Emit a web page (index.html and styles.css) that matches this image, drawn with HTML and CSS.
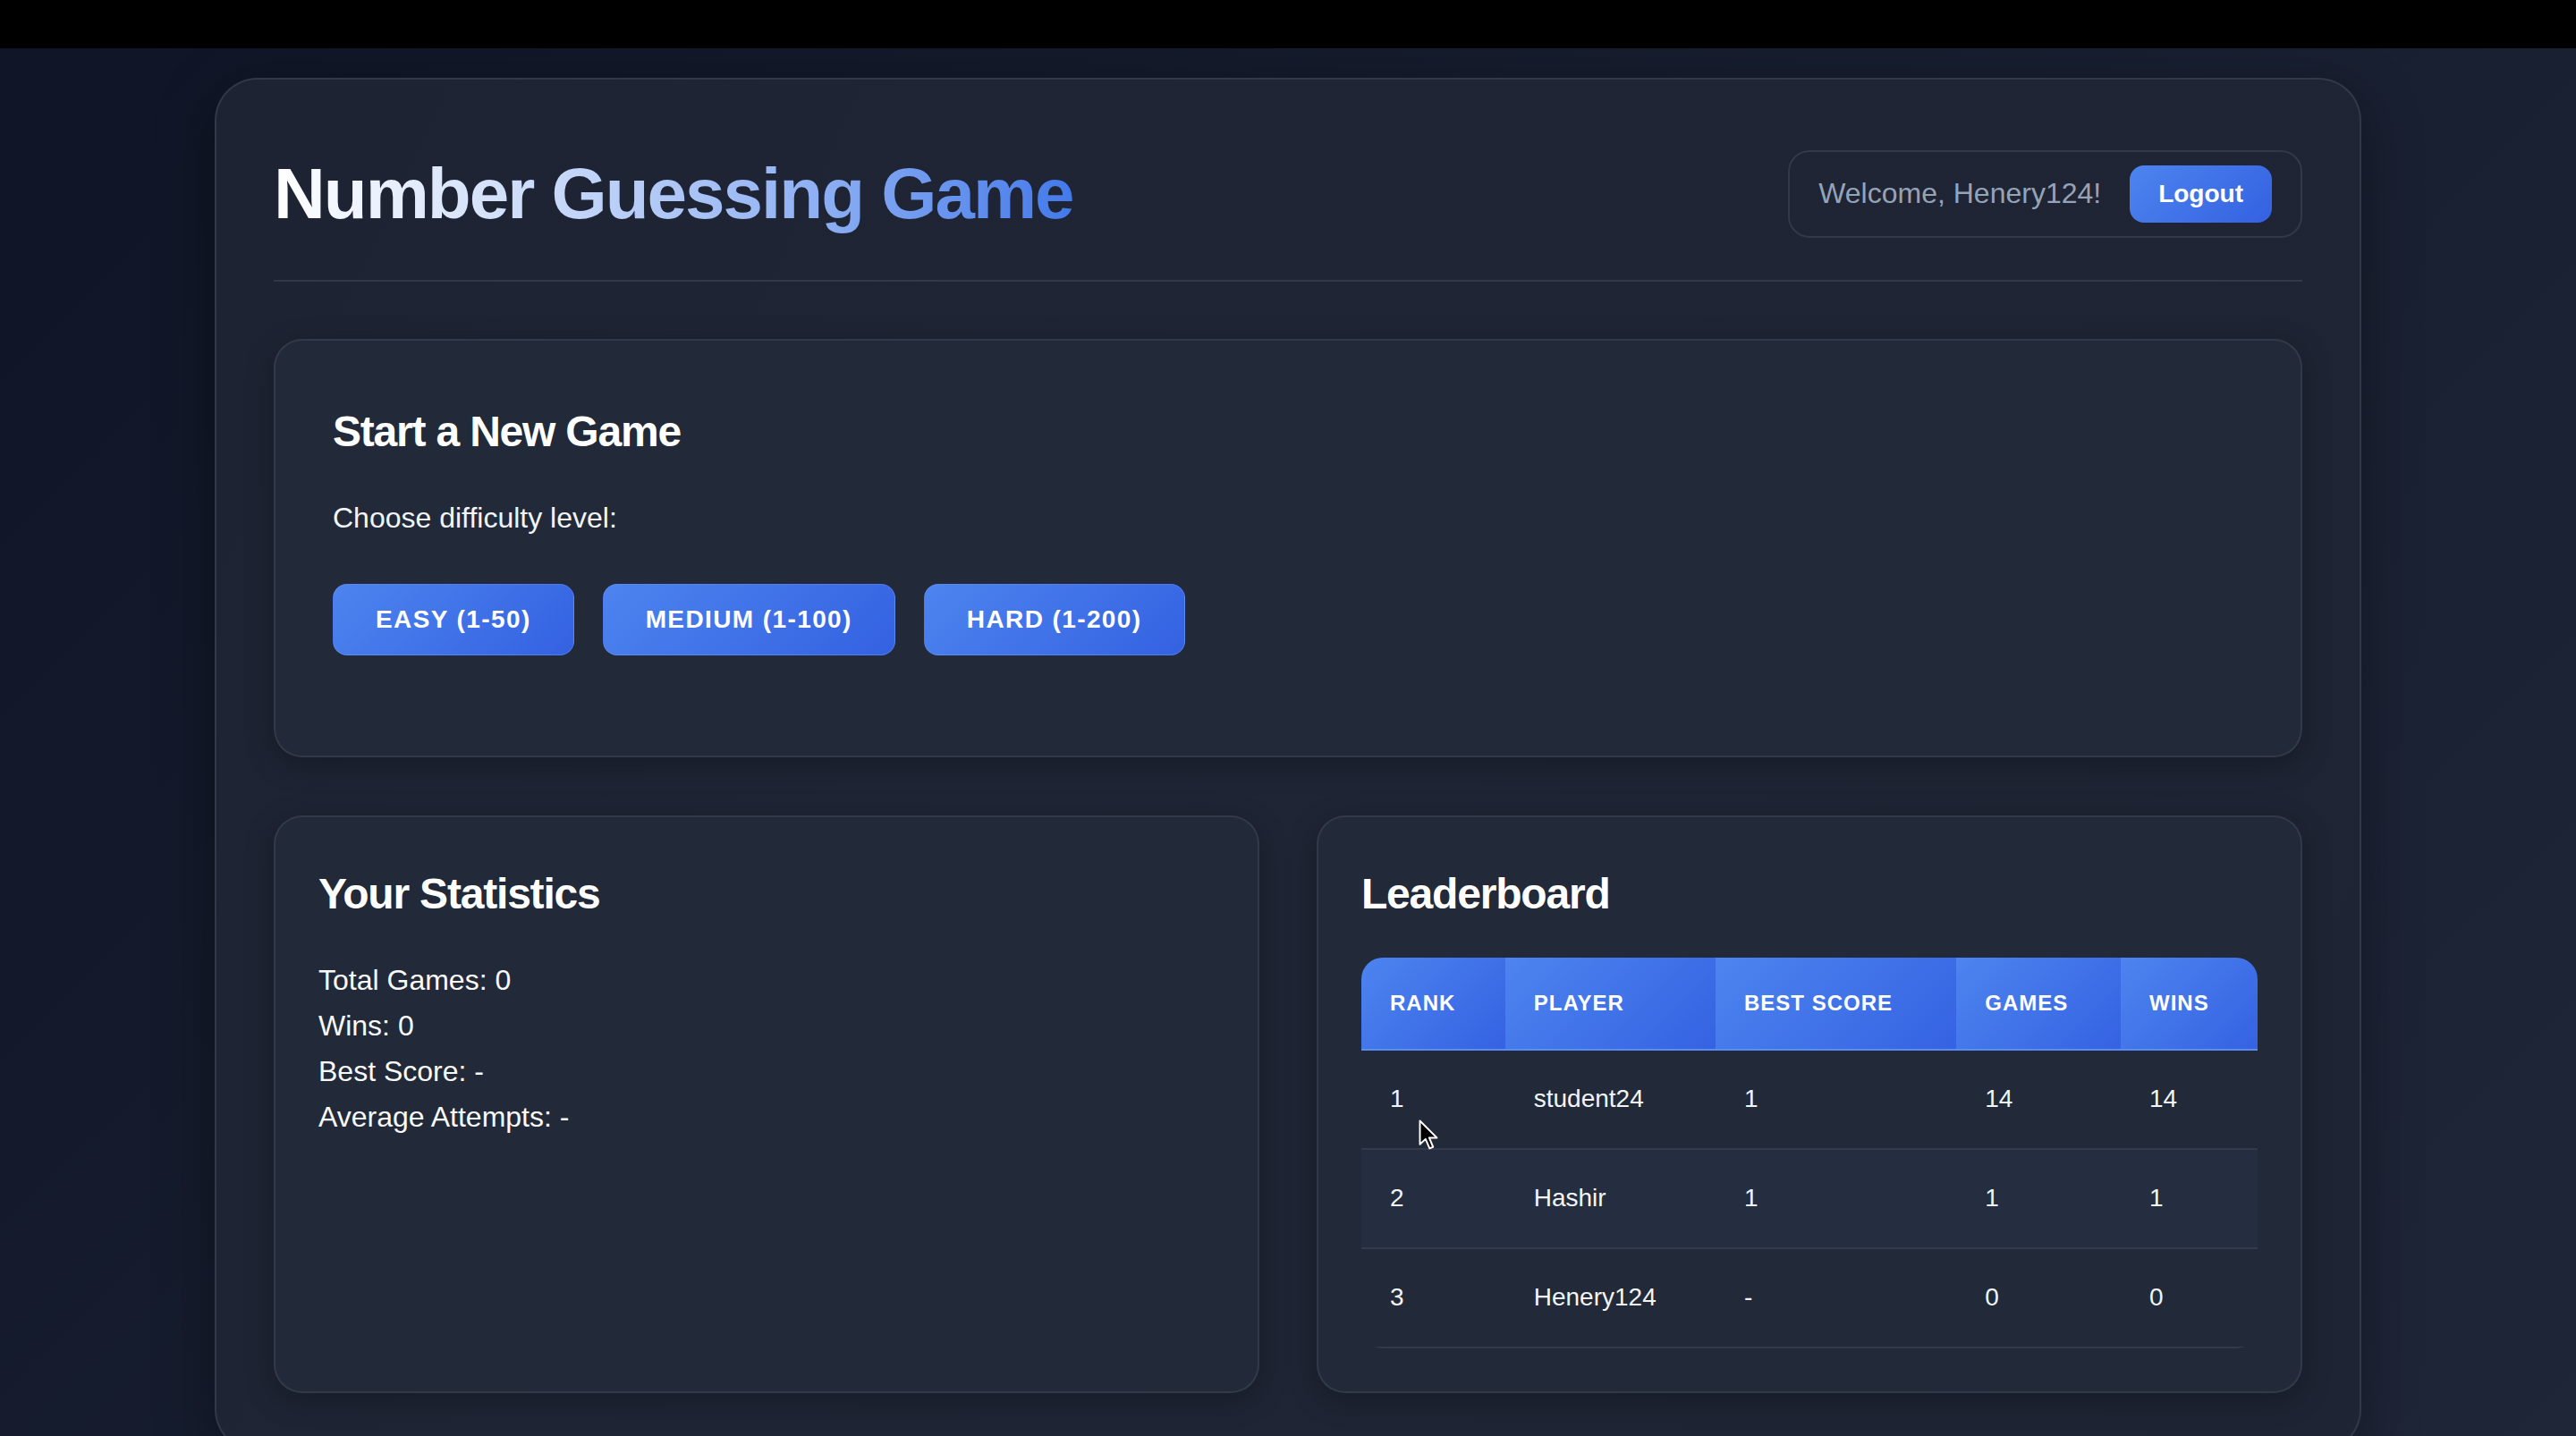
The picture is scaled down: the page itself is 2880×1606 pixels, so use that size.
FILE: index.html
```html
<!DOCTYPE html>
<html lang="en">
<head>
<meta charset="utf-8">
<title>Number Guessing Game</title>
<link rel="stylesheet" href="styles.css">
</head>
<body>
  <div class="topbar"></div>
  <main class="page">
    <div class="container">
      <header class="header">
        <h1 class="title">Number Guessing Game</h1>
        <div class="user-box">
          <span class="welcome">Welcome, Henery124!</span>
          <button class="btn btn-logout">Logout</button>
        </div>
      </header>

      <section class="card new-game">
        <h2 class="card-title">Start a New Game</h2>
        <p class="hint">Choose difficulty level:</p>
        <div class="difficulty">
          <button class="btn btn-level">Easy (1-50)</button>
          <button class="btn btn-level">Medium (1-100)</button>
          <button class="btn btn-level">Hard (1-200)</button>
        </div>
      </section>

      <div class="grid">
        <section class="card stats">
          <h2 class="card-title">Your Statistics</h2>
          <p class="stat">Total Games: 0</p>
          <p class="stat">Wins: 0</p>
          <p class="stat">Best Score: -</p>
          <p class="stat">Average Attempts: -</p>
        </section>

        <section class="card leaderboard">
          <h2 class="card-title">Leaderboard</h2>
          <div class="table-wrap">
            <table class="board">
              <thead>
                <tr><th>Rank</th><th>Player</th><th>Best Score</th><th>Games</th><th>Wins</th></tr>
              </thead>
              <tbody>
                <tr><td>1</td><td>student24</td><td>1</td><td>14</td><td>14</td></tr>
                <tr><td>2</td><td>Hashir</td><td>1</td><td>1</td><td>1</td></tr>
                <tr><td>3</td><td>Henery124</td><td>-</td><td>0</td><td>0</td></tr>
              </tbody>
            </table>
          </div>
        </section>
      </div>
    </div>
  </main>

  <svg class="cursor" width="24" height="36" viewBox="0 0 16 24" aria-hidden="true">
    <path d="M1 1 L1 18.5 L5.2 14.6 L8.2 21.6 L10.8 20.5 L7.9 13.6 L13.6 13.6 Z" fill="#000" stroke="#fff" stroke-width="1.3" stroke-linejoin="round"/>
  </svg>
</body>
</html>
```

FILE: styles.css
```css
* {
  box-sizing: border-box;
}

html, body {
  margin: 0;
  padding: 0;
}

body {
  min-height: 1606px;
  font-family: "Liberation Sans", Arial, Helvetica, sans-serif;
  line-height: 1.6;
  color: #f1f5f9;
  background: linear-gradient(135deg, #0f1526 0%, #161d2e 45%, #1f2638 100%);
  overflow: hidden;
  position: relative;
}

.topbar {
  height: 54px;
  background: #000;
}

.page {
  padding-top: 33px;
}

.container {
  width: 2400px;
  margin: 0 auto;
  padding: 64px;
  border: 2px solid rgba(148, 163, 184, 0.16);
  border-radius: 48px;
  background: linear-gradient(115deg, #1d2332 0%, #1f2535 40%, #1e2433 100%);
  box-shadow: 0 16px 64px rgba(0, 0, 0, 0.35);
}

.header {
  display: flex;
  justify-content: space-between;
  align-items: center;
  padding-bottom: 32px;
  border-bottom: 2px solid rgba(148, 163, 184, 0.16);
  margin-bottom: 64px;
}

.title {
  margin: 0;
  font-size: 80px;
  font-weight: 700;
  line-height: 1.6;
  letter-spacing: -2px;
  background: linear-gradient(90deg, #ffffff 0%, #c3d5f8 38%, #8eb0f3 68%, #4379ea 100%);
  -webkit-background-clip: text;
  background-clip: text;
  color: transparent;
}

.user-box {
  display: flex;
  align-items: center;
  gap: 32px;
  padding: 15px 32px;
  border: 2px solid rgba(148, 163, 184, 0.16);
  border-radius: 24px;
}

.welcome {
  font-size: 32px;
  color: #94a3b8;
}

.btn {
  font-family: inherit;
  color: #fff;
  font-weight: 700;
  border: none;
  cursor: pointer;
  background: linear-gradient(135deg, #4d84ef 0%, #3461e1 100%);
}

.btn-logout {
  font-size: 28px;
  line-height: 32px;
  padding: 16px 32px;
  border-radius: 16px;
}

.card {
  background: #222938;
  border: 2px solid rgba(148, 163, 184, 0.14);
  border-radius: 32px;
  box-shadow: 0 8px 32px rgba(0, 0, 0, 0.25);
}

.new-game {
  padding: 64px;
}

.card-title {
  margin: 0 0 32px;
  font-size: 48px;
  font-weight: 700;
  line-height: 1.6;
  letter-spacing: -1.2px;
  color: #fff;
}

.hint {
  margin: 0;
  font-size: 32px;
  color: #f1f5f9;
}

.difficulty {
  display: flex;
  gap: 32px;
  margin: 48px 0;
}

.btn-level {
  font-size: 28px;
  line-height: 44px;
  padding: 17px 47px;
  border-radius: 16px;
  text-transform: uppercase;
  letter-spacing: 1.4px;
  border: 1px solid rgba(120, 160, 255, 0.35);
}

.grid {
  display: grid;
  grid-template-columns: 1fr 1fr;
  gap: 64px;
  margin-top: 65px;
}

.stats,
.leaderboard {
  padding: 48px;
}

.stat {
  margin: 0;
  font-size: 32px;
  color: #f8fafc;
}

.table-wrap {
  border-radius: 24px;
  overflow: hidden;
}

.board {
  width: 100%;
  border-collapse: separate;
  border-spacing: 0;
}

.board th {
  text-align: left;
  font-size: 24px;
  font-weight: 700;
  text-transform: uppercase;
  letter-spacing: 1px;
  padding: 32px;
  color: #fff;
  background: linear-gradient(135deg, #4d84ef 0%, #3562e2 100%);
  border-bottom: 2px solid #5a8cf2;
}

.board td {
  font-size: 28px;
  padding: 32px;
  color: #f1f5f9;
  border-bottom: 2px solid #323a4b;
}

.board tbody tr:nth-child(even) td {
  background: #252d40;
}

.cursor {
  position: absolute;
  left: 1586px;
  top: 1252px;
}
```
